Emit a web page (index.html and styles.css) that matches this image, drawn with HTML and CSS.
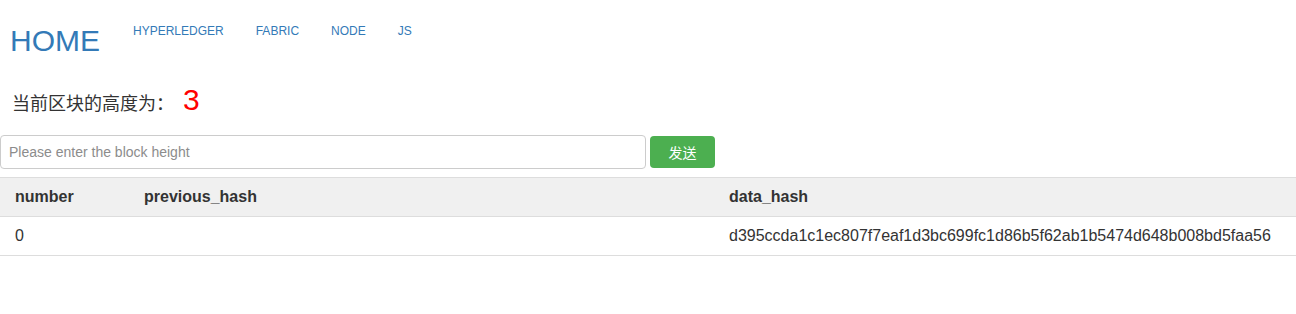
FILE: index.html
```html
<!DOCTYPE html>
<html lang="zh">
<head>
<meta charset="utf-8">
<title>HOME</title>
<link rel="stylesheet" href="styles.css">
</head>
<body>
<header class="header">
  <a class="brand" href="#">HOME</a>
  <nav class="nav">
    <a class="nav-link" href="#">HYPERLEDGER</a>
    <a class="nav-link" href="#">FABRIC</a>
    <a class="nav-link" href="#">NODE</a>
    <a class="nav-link" href="#">JS</a>
  </nav>
</header>
<div class="title">当前区块的高度为： <span class="num">3</span></div>
<form class="search">
  <input class="search-input" type="text" placeholder="Please enter the block height">
  <button class="search-btn" type="button">发送</button>
</form>
<table class="blocks">
  <colgroup>
    <col class="c-num">
    <col class="c-prev">
    <col>
  </colgroup>
  <thead>
    <tr><th>number</th><th>previous_hash</th><th>data_hash</th></tr>
  </thead>
  <tbody>
    <tr><td>0</td><td></td><td>d395ccda1c1ec807f7eaf1d3bc699fc1d86b5f62ab1b5474d648b008bd5faa56</td></tr>
  </tbody>
</table>
</body>
</html>
```

FILE: styles.css
```css
html, body {
  margin: 0;
  padding: 0;
  background: #fff;
}
body {
  font-family: "Liberation Sans", Arial, "Noto Sans CJK SC", sans-serif;
  color: #333;
}
.header {
  display: flex;
  align-items: flex-start;
  padding: 0 10px;
}
.brand {
  font-size: 30px;
  line-height: 33px;
  margin-top: 24px;
  margin-right: 17px;
  color: #337ab7;
  text-decoration: none;
}
.nav {
  display: flex;
  margin-top: 21px;
}
.nav-link {
  font-size: 12px;
  line-height: 20px;
  padding: 0 16px;
  color: #337ab7;
  text-decoration: none;
}
.title {
  margin: 26px 0 0 12px;
  font-size: 18px;
  line-height: 33px;
  color: #333;
}
.num {
  margin-left: 4px;
  font-size: 30px;
  line-height: 33px;
  color: #ff0000;
}
.search {
  display: flex;
  align-items: center;
  gap: 4px;
  margin: 14px 0 0 0;
}
.search-input {
  box-sizing: border-box;
  width: 646px;
  height: 34px;
  margin: 0;
  padding: 0 8px;
  border: 1px solid #ccc;
  border-radius: 4px;
  font-family: "Liberation Sans", Arial, sans-serif;
  font-size: 14px;
  color: #555;
  outline: none;
}
.search-input::placeholder {
  color: #8c8c8c;
}
.search-btn {
  box-sizing: border-box;
  width: 65px;
  height: 32px;
  margin: 0;
  border: none;
  border-radius: 4px;
  background: #4caf50;
  color: #fff;
  font-family: "Liberation Sans", "Noto Sans CJK SC", sans-serif;
  font-size: 14px;
}
.blocks {
  width: 100%;
  margin-top: 8px;
  border-collapse: collapse;
  table-layout: fixed;
  font-size: 16px;
}
.c-num { width: 129px; }
.c-prev { width: 585px; }
.blocks th, .blocks td {
  text-align: left;
  padding: 8px 15px;
  line-height: 22px;
  border-top: 1px solid #ddd;
  border-bottom: 1px solid #ddd;
  white-space: nowrap;
}
.blocks th {
  background: #f0f0f0;
  font-weight: bold;
}
```
